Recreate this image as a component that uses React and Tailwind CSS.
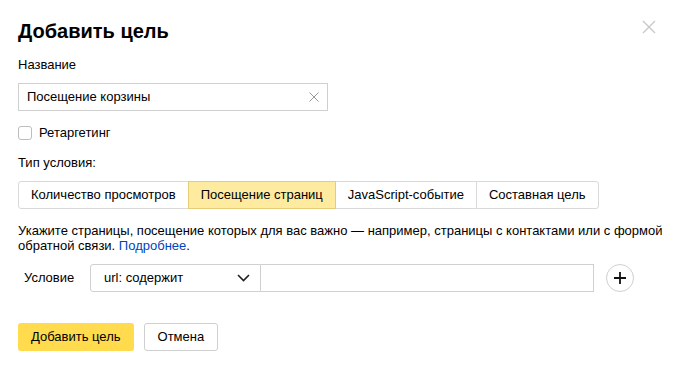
import React, { useState } from 'react';

const TABS = ['Количество просмотров', 'Посещение страниц', 'JavaScript-событие', 'Составная цель'];

const App = () => {
  const [active, setActive] = useState(1);
  const [name, setName] = useState('Посещение корзины');

  return (
    <div className="w-[676px] h-[368px] bg-white text-[13px] text-black relative" style={{ fontFamily: '"Liberation Sans", Arial, sans-serif' }}>
      <button className="absolute right-[20px] top-[20px] text-[#c8c8c8]">
        <svg width="14" height="14" viewBox="0 0 14 14" fill="none" stroke="currentColor" strokeWidth="1.4">
          <path d="M1 1l12 12M13 1L1 13" />
        </svg>
      </button>

      <div className="px-[18px] pt-[18px] flex flex-col">
        <h1 className="text-[20px] font-bold leading-[26px]">Добавить цель</h1>

        <label className="mt-[13px] leading-[16px]">Название</label>
        <div className="mt-[10px] w-[310px] h-[28px] border border-[#d0d0d0] flex items-center pl-[8px] pr-[8px]">
          <input
            value={name}
            onChange={(e) => setName(e.target.value)}
            className="flex-1 outline-none bg-transparent"
          />
          <svg width="10" height="10" viewBox="0 0 10 10" stroke="#999" strokeWidth="1" fill="none">
            <path d="M0.5 0.5l9 9M9.5 0.5l-9 9" />
          </svg>
        </div>

        <label className="mt-[14px] flex items-center gap-[7px] leading-[16px]">
          <span className="w-[14px] h-[14px] rounded-[3px] border border-[#bdbdbd] bg-white" />
          Ретаргетинг
        </label>

        <div className="mt-[14px] leading-[16px]">Тип условия:</div>

        <div className="mt-[10px] flex">
          {TABS.map((t, i) => (
            <button
              key={t}
              onClick={() => setActive(i)}
              className={`h-[28px] px-[12px] border -ml-px first:ml-0 first:rounded-l-[3px] last:rounded-r-[3px] ${
                i === active ? 'bg-[#ffeba0] border-[#e5cd78] relative z-10' : 'bg-white border-[#d9d9d9]'
              }`}
            >
              {t}
            </button>
          ))}
        </div>

        <p className="mt-[14px] leading-[15px] w-[655px]">
          Укажите страницы, посещение которых для вас важно — например, страницы с контактами или с формой обратной связи.{' '}
          <a className="text-[#04b]">Подробнее</a>.
        </p>

        <div className="mt-[11px] flex items-center">
          <span className="w-[72px] pl-[6px]">Условие</span>
          <div className="w-[171px] h-[28px] border border-[#d0d0d0] rounded-l-[3px] flex items-center justify-between pl-[13px] pr-[10px]">
            <span>url: содержит</span>
            <svg width="13" height="8" viewBox="0 0 13 8" fill="none" stroke="#222" strokeWidth="1.6">
              <path d="M1 1l5.5 5.5L12 1" />
            </svg>
          </div>
          <input className="w-[333px] h-[28px] border border-l-0 border-[#d0d0d0] outline-none px-[8px]" />
          <button className="ml-[12px] w-[28px] h-[28px] rounded-full border border-[#d0d0d0] flex items-center justify-center">
            <svg width="14" height="14" viewBox="0 0 14 14" stroke="#111" strokeWidth="1.8">
              <path d="M7 1v12M1 7h12" />
            </svg>
          </button>
        </div>

        <div className="mt-[31px] flex gap-[10px]">
          <button className="h-[28px] px-[13px] rounded-[3px] bg-[#ffdb4d]">Добавить цель</button>
          <button className="h-[28px] px-[13px] rounded-[3px] border border-[#d0d0d0] bg-white">Отмена</button>
        </div>
      </div>
    </div>
  );
};

export default App;
